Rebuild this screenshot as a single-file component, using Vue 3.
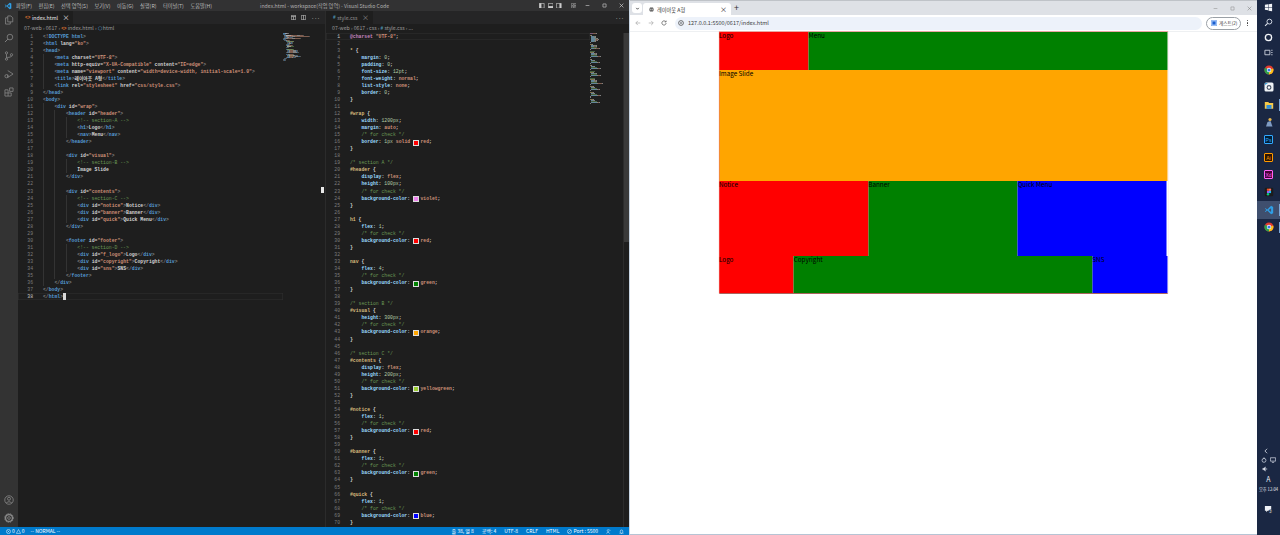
<script setup>
import { computed } from 'vue'

const htmlSrc = `<!DOCTYPE html>
<html lang="ko">
<head>
    <meta charset="UTF-8">
    <meta http-equiv="X-UA-Compatible" content="IE=edge">
    <meta name="viewport" content="width=device-width, initial-scale=1.0">
    <title>레이아웃 A형</title>
    <link rel="stylesheet" href="css/style.css">
</head>
<body>
    <div id="wrap">
        <header id="header">
            <!-- section-A -->
            <h1>Logo</h1>
            <nav>Menu</nav>
        </header>
        
        <div id="visual">
            <!-- section-B -->
            Image Slide
        </div>
        
        <div id="contents">
            <!-- section-C -->
            <div id="notice">Notice</div>
            <div id="banner">Banner</div>
            <div id="quick">Quick Menu</div>
        </div>
        
        <footer id="footer">
            <!-- section-D -->
            <div id="f_logo">Logo</div>
            <div id="copyright">Copyright</div>
            <div id="sns">SNS</div>
        </footer>
    </div>
</body>
</html>`

const cssSrc = `@charset "UTF-8";

* {
    margin: 0;
    padding: 0;
    font-size: 12pt;
    font-weight: normal;
    list-style: none;
    border: 0;
}

#wrap {
    width: 1200px;
    margin: auto;
    /* for check */
    border: 1px solid red;
}

/* section A */
#header {
    display: flex;
    height: 100px;
    /* for check */
    background-color: violet;
}

h1 {
    flex: 1;
    /* for check */
    background-color: red;
}

nav {
    flex: 4;
    /* for check */
    background-color: green;
}

/* section B */
#visual {
    height: 300px;
    /* for check */
    background-color: orange;
}

/* section C */
#contents {
    display: flex;
    height: 200px;
    /* for check */
    background-color: yellowgreen;
}

#notice {
    flex: 1;
    /* for check */
    background-color: red;
}

#banner {
    flex: 1;
    /* for check */
    background-color: green;
}

#quick {
    flex: 1;
    /* for check */
    background-color: blue;
}`

const swatches = ['red', 'green', 'blue', 'violet', 'orange', 'yellowgreen']

function splitIndent(line) {
  const m = line.match(/^ */)[0].length
  return { guides: Math.floor(m / 4), rest: line.slice(m) }
}

function tokenHtml(rest) {
  const out = []
  const re = /<!--.*?-->|<\/?!?\w*|\/?>|"[^"]*"|[\w-]+(?==)|=|[^<>"=]+/g
  for (const t of rest.match(re) || []) {
    if (t.startsWith('<!--')) out.push({ c: 'comment', t })
    else if (t[0] === '<') {
      const m = t.match(/^<\/?!?/)[0]
      out.push({ c: 'punct', t: m })
      out.push({ c: 'tag', t: t.slice(m.length) })
    } else if (t === '>' || t === '/>') out.push({ c: 'punct', t })
    else if (t[0] === '"') out.push({ c: 'str', t })
    else if (t === '=') out.push({ c: 'plain', t })
    else if (/^[\w-]+$/.test(t) && rest.includes(t + '=')) out.push({ c: 'attr', t })
    else if (t === ' html') out.push({ c: 'tag', t })
    else out.push({ c: 'plain', t })
  }
  return out
}

function tokenCss(rest) {
  if (!rest) return []
  if (rest.startsWith('/*')) return [{ c: 'comment', t: rest }]
  if (rest.startsWith('@charset')) {
    return [{ c: 'at', t: '@charset ' }, { c: 'str', t: '"UTF-8"' }, { c: 'plain', t: ';' }]
  }
  if (rest === '}') return [{ c: 'plain', t: '}' }]
  if (rest.endsWith('{')) {
    return [{ c: 'sel', t: rest.slice(0, -1) }, { c: 'plain', t: '{' }]
  }
  const m = rest.match(/^([\w-]+): (.*);$/)
  const out = [{ c: 'attr', t: m[1] }, { c: 'plain', t: ': ' }]
  m[2].split(' ').forEach((v, i) => {
    if (i) out.push({ c: 'plain', t: ' ' })
    if (swatches.includes(v)) out.push({ swatch: v })
    out.push({ c: /^\d/.test(v) ? 'num' : 'str', t: v })
  })
  out.push({ c: 'plain', t: ';' })
  return out
}

const build = (src, fn) =>
  src.split('\n').map((line, i) => {
    const { guides, rest } = splitIndent(line)
    return { n: i + 1, guides, tokens: fn(rest) }
  })

const htmlLines = computed(() => build(htmlSrc, tokenHtml))
const cssLines = computed(() => build(cssSrc, tokenCss))

const miniColors = {
  punct: '#808080', tag: '#569cd6', attr: '#9cdcfe', str: '#ce9178', comment: '#6a9955',
  plain: '#d4d4d4', sel: '#d7ba7d', num: '#b5cea8', at: '#c586c0'
}

function miniStyle(tok, indent) {
  if (tok.swatch) return { width: '0px' }
  return { width: tok.t.length * 0.36 + 'px', background: miniColors[tok.c] }
}

const menus = ['파일(F)', '편집(E)', '선택 영역(S)', '보기(V)', '이동(G)', '실행(R)', '터미널(T)', '도움말(H)']
</script>

<template>
  <div class="screen">
    <!-- vs code -->
    <div class="vscode">
      <div class="titlebar">
        <svg class="vs-logo" viewBox="0 0 24 24"><path d="M17 2 8 11 3.5 7.500 2 8.500 6 12l-4 3.500 1.500 1L8 13l9 9 5-2.500V4.500z" fill="#2f9fe6"/><path d="M17 7.500v9L11 12z" fill="#333"/></svg>
        <div class="menus"><span v-for="m in menus" :key="m">{{ m }}</span></div>
        <div class="wintitle">index.html - workspace(작업 영역) - Visual Studio Code</div>
        <div class="layout-btns">
          <svg viewBox="0 0 8 8"><path d="M.5.5h7v7h-7zM3 .5v7" fill="none" stroke="#ccc"/><path d="M.5.5H3v7H.5z" fill="#ccc"/></svg>
          <svg viewBox="0 0 8 8"><path d="M.5.5h7v7h-7z" fill="none" stroke="#ccc"/><path d="M.5 4.500h7v3h-7z" fill="#ccc"/></svg>
          <svg viewBox="0 0 8 8"><path d="M.5.5h7v7h-7z" fill="none" stroke="#ccc"/><path d="M5 .5h2.500v7H5z" fill="#ccc"/></svg>
          <svg class="gap" viewBox="0 0 8 8"><path d="M.5.5h3v3h-3zM4.500.5h3v3h-3zM.5 4.500h3v3h-3zM4.500 4.500h3v3h-3z" fill="none" stroke="#aaa" stroke-width=".8"/></svg>
        </div>
        <div class="win-btns">
          <svg viewBox="0 0 8 8"><path d="M1 4h6" stroke="#ccc"/></svg>
          <svg viewBox="0 0 8 8"><path d="M1.500 1.500h5v5h-5z" fill="none" stroke="#ccc"/></svg>
          <svg viewBox="0 0 8 8"><path d="m1 1 6 6M7 1 1 7" stroke="#ddd"/></svg>
        </div>
      </div>

      <div class="workbench">
        <div class="activity">
          <svg viewBox="0 0 16 16"><path d="M6 1.500h5l3 3V11H6zM6 4.500H2.500v10H10V11" fill="none" stroke="#8c8c8c" stroke-width="1.200"/></svg>
          <svg viewBox="0 0 16 16"><circle cx="9.500" cy="6.500" r="4.500" fill="none" stroke="#8c8c8c" stroke-width="1.200"/><path d="M6.300 9.700 1.500 14.500" stroke="#8c8c8c" stroke-width="1.400"/></svg>
          <svg viewBox="0 0 16 16"><circle cx="4" cy="3" r="1.800" fill="none" stroke="#8c8c8c" stroke-width="1.200"/><circle cx="4" cy="13" r="1.800" fill="none" stroke="#8c8c8c" stroke-width="1.200"/><circle cx="12" cy="6" r="1.800" fill="none" stroke="#8c8c8c" stroke-width="1.200"/><path d="M4 5v6M12 8c0 3-8 1.500-8 3" fill="none" stroke="#8c8c8c" stroke-width="1.200"/></svg>
          <svg viewBox="0 0 16 16"><path d="M6 2.500 14.500 8 6 13.500V9" fill="none" stroke="#8c8c8c" stroke-width="1.200"/><circle cx="4" cy="11.500" r="2.600" fill="none" stroke="#8c8c8c" stroke-width="1.200"/></svg>
          <svg viewBox="0 0 16 16"><path d="M1.500 4.500h5v5h5v5h-10zM1.500 9.500h5v5M9 1.500h5.500v5.500H9z" fill="none" stroke="#8c8c8c" stroke-width="1.200"/></svg>
          <div class="activity-fill"></div>
          <svg viewBox="0 0 16 16"><circle cx="8" cy="8" r="6.800" fill="none" stroke="#8c8c8c" stroke-width="1.200"/><circle cx="8" cy="6" r="2.400" fill="none" stroke="#8c8c8c" stroke-width="1.200"/><path d="M3.800 13c.8-3 7.600-3 8.400 0" fill="none" stroke="#8c8c8c" stroke-width="1.200"/></svg>
          <svg viewBox="0 0 16 16"><circle cx="8" cy="8" r="2.200" fill="none" stroke="#8c8c8c" stroke-width="1.200"/><circle cx="8" cy="8" r="5.500" fill="none" stroke="#8c8c8c" stroke-width="2"/><circle cx="8" cy="8" r="7" fill="none" stroke="#8c8c8c" stroke-width="1.400" stroke-dasharray="2 1.700"/></svg>
        </div>

        <!-- left group -->
        <div class="group group-left">
          <div class="tabs">
            <div class="tab active">
              <span class="file-ic orange">&lt;&gt;</span><span>index.html</span><span class="tab-x">×</span>
            </div>
            <div class="tabs-fill"></div>
            <div class="tab-actions">
              <svg viewBox="0 0 8 8"><path d="M.5.5h7v7h-7zM.5 2.500h7M4 2.500v5" fill="none" stroke="#ccc"/></svg>
              <svg viewBox="0 0 8 8"><path d="M.5.5h7v7h-7zM4 .5v7" fill="none" stroke="#ccc"/></svg>
              <span>···</span>
            </div>
          </div>
          <div class="crumbs">07-web <i>›</i> 0617 <i>›</i> <span class="file-ic orange">&lt;&gt;</span> index.html <i>›</i> <span class="cube">⬡</span> html</div>
          <div class="editor">
            <div class="code">
              <div v-for="l in htmlLines" :key="l.n" class="line" :class="{ current: l.n === 38 }">
                <span class="num" :class="{ on: l.n === 38 }">{{ l.n }}</span>
                <span class="text">
                  <span v-for="g in l.guides" :key="g" class="guide"></span>
                  <span v-for="(t, i) in l.tokens" :key="i" :class="t.c">{{ t.t }}</span>
                  <span v-if="l.n === 38" class="cursor"></span>
                </span>
              </div>
            </div>
            <div class="minimap mini-left">
              <div v-for="l in htmlLines" :key="l.n" class="mini-line">
                <span class="mini-tok" :style="{ width: l.guides * 1.44 + 'px' }"></span>
                <span v-for="(t, i) in l.tokens" :key="i" class="mini-tok" :style="miniStyle(t)"></span>
              </div>
            </div>
          </div>
        </div>

        <!-- right group -->
        <div class="group group-right">
          <div class="tabs">
            <div class="tab active dim">
              <span class="file-ic blue">#</span><span>style.css</span><span class="tab-x">×</span>
            </div>
            <div class="tabs-fill"></div>
            <div class="tab-actions"><span>···</span></div>
          </div>
          <div class="crumbs">07-web <i>›</i> 0617 <i>›</i> css <i>›</i> <span class="file-ic blue">#</span> style.css <i>›</i> ...</div>
          <div class="editor">
            <div class="code">
              <div v-for="l in cssLines" :key="l.n" class="line" :class="{ current: l.n === 1 }">
                <span class="num" :class="{ on: l.n === 1 }">{{ l.n }}</span>
                <span class="text">
                  <span v-for="g in l.guides" :key="g" class="guide"></span>
                  <template v-for="(t, i) in l.tokens" :key="i">
                    <span v-if="t.swatch" class="swatch" :style="{ background: t.swatch }"></span>
                    <span v-else :class="t.c">{{ t.t }}</span>
                  </template>
                </span>
              </div>
            </div>
            <div class="minimap mini-right">
              <div v-for="l in cssLines" :key="l.n" class="mini-line">
                <span class="mini-tok" :style="{ width: l.guides * 1.44 + 'px' }"></span>
                <span v-for="(t, i) in l.tokens" :key="i" class="mini-tok" :style="miniStyle(t)"></span>
              </div>
            </div>
            <div class="scrollbar"><div class="slider"></div></div>
          </div>
          <div class="ibeam"></div>
        </div>
      </div>

      <div class="statusbar">
        <span class="st-left">
          <svg viewBox="0 0 8 8"><circle cx="4" cy="4" r="3.300" fill="none" stroke="#fff" stroke-width=".8"/><path d="m2.500 2.500 3 3m0-3-3 3" stroke="#fff" stroke-width=".7"/></svg>0
          <svg viewBox="0 0 8 8"><path d="M4 .8 7.500 7H.5z" fill="none" stroke="#fff" stroke-width=".8"/></svg>0
        </span>
        <span class="st-mode">-- NORMAL --</span>
        <span class="st-fill"></span>
        <span class="st-right">
          <span>줄 38, 열 8</span><span>공백: 4</span><span>UTF-8</span><span>CRLF</span><span>HTML</span>
          <span class="st-port"><svg viewBox="0 0 8 8"><circle cx="4" cy="4" r="3.300" fill="none" stroke="#fff" stroke-width=".8"/><path d="m1.500 6.500 5-5" stroke="#fff" stroke-width=".7"/></svg>Port : 5500</span>
          <svg viewBox="0 0 8 8"><circle cx="3.500" cy="2.500" r="1.600" fill="none" stroke="#fff" stroke-width=".7"/><path d="M1 7.500c0-3 4-3 5 0M6 1l1.500 1.500" fill="none" stroke="#fff" stroke-width=".7"/></svg>
          <svg viewBox="0 0 8 8"><path d="M2 6V3.500a2 2 0 0 1 4 0V6l.8.7H1.200zM3.300 7.300h1.400" fill="none" stroke="#fff" stroke-width=".8"/></svg>
        </span>
      </div>
    </div>

    <!-- chrome -->
    <div class="browser">
      <div class="chrome-tabs">
        <div class="tab-search"><svg viewBox="0 0 8 8"><path d="m2 3 2 2.200L6 3" fill="none" stroke="#222" stroke-width="1.200"/></svg></div>
        <div class="chrome-tab">
          <svg class="globe" viewBox="0 0 8 8"><circle cx="4" cy="4" r="3.500" fill="#444"/><path d="M4 .8c-2 2-2 4.400 0 6.400m0-6.400c2 2 2 4.400 0 6.400M.8 4h6.400" fill="none" stroke="#fff" stroke-width=".6"/></svg>
          <span class="chrome-title">레이아웃 A형</span>
          <span class="chrome-x">×</span>
        </div>
        <span class="chrome-plus">+</span>
        <span class="chrome-fill"></span>
        <div class="chrome-win">
          <svg viewBox="0 0 8 8"><path d="M1 4h6" stroke="#888" stroke-width=".8"/></svg>
          <svg viewBox="0 0 8 8"><path d="M1.500 1.500h5v5h-5z" fill="none" stroke="#888" stroke-width=".8"/></svg>
          <svg viewBox="0 0 8 8"><path d="m1 1 6 6M7 1 1 7" stroke="#777" stroke-width=".8"/></svg>
        </div>
      </div>
      <div class="toolbar">
        <svg class="nav-ic" viewBox="0 0 8 8"><path d="M7 4H1.200M3.800 1.200 1 4l2.800 2.800" fill="none" stroke="#9a9a9a" stroke-width=".8"/></svg>
        <svg class="nav-ic" viewBox="0 0 8 8"><path d="M1 4h5.800M4.200 1.200 7 4 4.200 6.800" fill="none" stroke="#9a9a9a" stroke-width=".8"/></svg>
        <svg class="nav-ic" viewBox="0 0 8 8"><path d="M6.800 4A2.800 2.800 0 1 1 6 2M6.800.8V2.600H5" fill="none" stroke="#444" stroke-width=".9"/></svg>
        <div class="omnibox">
          <svg viewBox="0 0 8 8"><circle cx="4" cy="4" r="3.200" fill="none" stroke="#333" stroke-width=".9"/><circle cx="4" cy="4" r="1" fill="#333"/></svg>
          <span>127.0.0.1:5500/0617/index.html</span>
        </div>
        <div class="guest">
          <span class="guest-ic"></span><span>게스트(2)</span>
        </div>
        <span class="kebab"><i></i><i></i><i></i></span>
      </div>
      <div class="page">
        <div class="wrap">
          <div class="p-header">
            <div class="p-logo">Logo</div>
            <div class="p-menu">Menu</div>
          </div>
          <div class="p-visual">Image Slide</div>
          <div class="p-contents">
            <div class="red">Notice</div>
            <div class="green">Banner</div>
            <div class="blue">Quick Menu</div>
          </div>
          <div class="p-footer">
            <div class="red one">Logo</div>
            <div class="green four">Copyright</div>
            <div class="blue one">SNS</div>
          </div>
        </div>
      </div>
    </div>

    <!-- taskbar -->
    <div class="taskbar">
      <div class="tb-top">
        <div class="tb-sm"><svg viewBox="0 0 10 10"><path d="M1 2 4.500 1.500v3H1zM5 1.400 9 .8v3.700H5zM1 5h3.500v3L1 7.500zM5 5h4v4.200L5 8.600z" fill="#f2f4f8"/></svg></div>
        <div class="tb-sm"><svg viewBox="0 0 10 10"><circle cx="6" cy="4" r="2.700" fill="none" stroke="#dfe4ee" stroke-width="1"/><path d="M4 6 1.200 8.800" stroke="#dfe4ee" stroke-width="1.200"/></svg></div>
        <div class="tb-sm"><svg viewBox="0 0 10 10"><circle cx="5" cy="5" r="3.500" fill="none" stroke="#f2f4f8" stroke-width="1.500"/></svg></div>
        <div class="tb-sm"><svg viewBox="0 0 10 10"><path d="M1 2.500h5.500v5H1zM8 2.500h1.500M8 5h1.500M8 7.500h1.500" fill="none" stroke="#dfe4ee" stroke-width=".9"/></svg></div>
      </div>
      <div class="tb-apps">
        <div class="tb-app"><svg viewBox="0 0 10 10"><circle cx="5" cy="5" r="4.500" fill="#e33b2e"/><path d="M5 5 9.200 3.500A4.500 4.500 0 0 1 5 9.500z" fill="#f9c21b"/><path d="M5 5 5 9.500A4.500 4.500 0 0 1 1 2.800z" fill="#2ba24c"/><circle cx="5" cy="5" r="2.200" fill="#fff"/><circle cx="5" cy="5" r="1.600" fill="#3b78e7"/></svg></div>
        <div class="tb-app"><svg viewBox="0 0 10 10"><rect x=".5" y=".5" width="9" height="9" rx="1.500" fill="#eef2f6"/><circle cx="5" cy="5.500" r="2.400" fill="#4a5568"/><circle cx="5" cy="5.500" r="1.200" fill="#fff"/><path d="M1 1h3L1 3z" fill="#39a0d8"/></svg></div>
        <div class="tb-app mark"><svg viewBox="0 0 10 10"><path d="M.8 2h3.400l1 1h4v5.800H.8z" fill="#f7c948"/><path d="M2.500 5h5v3.800h-5z" fill="#2f8fdc"/></svg></div>
        <div class="tb-app"><svg viewBox="0 0 10 10"><circle cx="6" cy="2.500" r="1.600" fill="#e8b64c"/><path d="M2 9.500 3.500 5l3-1 2 5.500z" fill="#7f9cc4"/></svg></div>
        <div class="tb-app"><span class="adobe ps">Ps</span></div>
        <div class="tb-app"><span class="adobe ai">Ai</span></div>
        <div class="tb-app"><span class="adobe xd">Xd</span></div>
        <div class="tb-app"><svg viewBox="0 0 10 10"><rect x=".8" y=".8" width="8.400" height="8.400" rx="1" fill="#1c1c1c"/><circle cx="4" cy="2.700" r="1.200" fill="#f24e1e"/><circle cx="6" cy="2.700" r="1.200" fill="#ff7262"/><circle cx="4" cy="5" r="1.200" fill="#a259ff"/><circle cx="6" cy="5" r="1.200" fill="#1abcfe"/><circle cx="4" cy="7.300" r="1.200" fill="#0acf83"/></svg></div>
        <div class="tb-app active mark"><svg viewBox="0 0 24 24"><path d="M17 2 8 11 3.500 7.500 2 8.500 6 12l-4 3.500 1.500 1L8 13l9 9 5-2.500V4.500z" fill="#2f9fe6"/><path d="M17 7.500v9L11 12z" fill="#3f4f6e"/></svg></div>
        <div class="tb-app mark"><svg viewBox="0 0 10 10"><circle cx="5" cy="5" r="4.500" fill="#e33b2e"/><path d="M5 5 9.200 3.500A4.500 4.500 0 0 1 5 9.500z" fill="#f9c21b"/><path d="M5 5 5 9.500A4.500 4.500 0 0 1 1 2.800z" fill="#2ba24c"/><circle cx="5" cy="5" r="2.200" fill="#fff"/><circle cx="5" cy="5" r="1.600" fill="#3b78e7"/></svg></div>
      </div>
      <div class="tb-fill"></div>
      <div class="tray">
        <svg class="chev" viewBox="0 0 8 8"><path d="M5.500 1 2.500 4l3 3" fill="none" stroke="#e8ecf4" stroke-width="1"/></svg>
        <div class="tray-row">
          <svg viewBox="0 0 8 8"><circle cx="4" cy="4.500" r="2.600" fill="none" stroke="#dfe4ee" stroke-width=".9"/><path d="M4 .5v2" stroke="#dfe4ee"/></svg>
          <svg viewBox="0 0 8 8"><path d="M.5 1h7v4.500h-7zM2.500 7.200h3" fill="none" stroke="#dfe4ee" stroke-width=".9"/></svg>
        </div>
        <div class="tray-row left">
          <svg viewBox="0 0 8 8"><path d="M1 3v2h1.500L4.500 7V1L2.500 3zM6 3l1 1-1 1" fill="#dfe4ee" stroke="#dfe4ee" stroke-width=".4"/></svg>
        </div>
        <span class="tray-a">A</span>
        <span class="tray-time">오후 12:04</span>
        <svg class="tray-note" viewBox="0 0 10 10"><path d="M1 1h7v5.500H4L2.500 8V6.500H1z" fill="#eef1f6"/><circle cx="7.200" cy="7.200" r="2.300" fill="#30384c"/><text x="7.200" y="8.700" font-size="4" text-anchor="middle" fill="#fff" font-family="Liberation Sans">2</text></svg>
      </div>
    </div>
  </div>
</template>

<style scoped>
.screen {
  display: flex;
  width: 1280px;
  height: 535px;
  overflow: hidden;
  font-family: "Noto Sans CJK KR", "Liberation Sans", sans-serif;
}

/* vs code */
.vscode {
  width: 629px;
  display: flex;
  flex-direction: column;
  background: #1e1e1e;
  color: #ccc;
  flex: none;
}
.titlebar {
  height: 11px;
  background: #323233;
  display: flex;
  align-items: center;
  font-size: 5.2px;
  position: relative;
  flex: none;
}
.vs-logo {
  width: 8px;
  height: 8px;
  margin-left: 4px;
}
.menus {
  display: flex;
  gap: 6.5px;
  margin-left: 4px;
  color: #bdbdbd;
}
.wintitle {
  position: absolute;
  left: 260px;
  top: 0;
  line-height: 11px;
  color: #b0b0b0;
  white-space: nowrap;
}
.layout-btns {
  margin-left: auto;
  display: flex;
  gap: 3px;
  align-items: center;
}
.layout-btns svg {
  width: 5.500px;
  height: 5.500px;
}
.layout-btns .gap {
  margin-left: 6px;
}
.win-btns {
  display: flex;
  gap: 12px;
  margin-left: 9px;
  margin-right: 5px;
}
.win-btns svg {
  width: 5px;
  height: 5px;
}
.workbench {
  flex: 1;
  display: flex;
  min-height: 0;
}
.activity {
  width: 18px;
  background: #333;
  display: flex;
  flex-direction: column;
  align-items: center;
  flex: none;
}
.activity svg {
  width: 10px;
  height: 10px;
  margin: 4px 0;
  flex: none;
}
.activity-fill {
  flex: 1;
}
.group {
  display: flex;
  flex-direction: column;
  min-width: 0;
  position: relative;
}
.group-left {
  width: 307px;
  flex: none;
}
.group-right {
  flex: 1;
  border-left: 1px solid #2b2b2b;
}
.tabs {
  height: 13px;
  background: #252526;
  display: flex;
  font-size: 5.2px;
  flex: none;
}
.tab {
  display: flex;
  align-items: center;
  padding: 0 4px 0 7px;
  background: #1e1e1e;
  color: #e8e8e8;
  gap: 1.500px;
  min-width: 34px;
}
.tab.dim {
  color: #8f8f8f;
  background: #1e1e1e;
}
.tab-x {
  margin-left: 3px;
  font-size: 7px;
  line-height: 1;
}
.tabs-fill {
  flex: 1;
}
.tab-actions {
  display: flex;
  align-items: center;
  gap: 5px;
  padding-right: 5px;
  color: #bbb;
}
.tab-actions svg {
  width: 5px;
  height: 5px;
}
.file-ic {
  font-family: "Liberation Mono", monospace;
  font-size: 4.500px;
  font-weight: 700;
}
.file-ic.orange {
  color: #e37933;
}
.file-ic.blue {
  color: #519aba;
}
.crumbs {
  height: 8px;
  line-height: 8px;
  font-size: 5.2px;
  color: #9a9a9a;
  padding-left: 6px;
  white-space: nowrap;
  flex: none;
}
.crumbs i {
  font-style: normal;
}
.cube {
  color: #4f9fd8;
}
.editor {
  flex: 1;
  display: flex;
  min-height: 0;
  overflow: hidden;
  padding-top: 0.500px;
}
.code {
  flex: 1;
  min-width: 0;
  font-family: "Liberation Mono", "Noto Sans CJK KR", monospace;
  font-size: 4.770px;
  font-weight: 700;
}
.line {
  height: 7.060px;
  line-height: 7.060px;
  display: flex;
  white-space: pre;
}
.line.current {
  box-shadow: inset 0 0 0 0.500px #303030;
}
.num {
  width: 15px;
  margin-right: 10px;
  text-align: right;
  color: #7d7d7d;
  flex: none;
  font-weight: 400;
}
.group-right .num {
  width: 14px;
}
.num.on {
  color: #c6c6c6;
}
.text {
  display: flex;
  white-space: pre;
  color: #d4d4d4;
}
.guide {
  width: 11.450px;
  flex: none;
  box-shadow: inset 1px 0 0 #333;
}
.group-right .guide {
  box-shadow: none;
}
.punct { color: #808080; }
.tag { color: #569cd6; }
.attr { color: #9cdcfe; }
.str { color: #ce9178; }
.comment { color: #6a9955; font-weight: 400; }
.plain { color: #d4d4d4; }
.sel { color: #d7ba7d; }
.at { color: #c586c0; }
.code .num { color: #7d7d7d; }
.code .num.on { color: #c6c6c6; }
.text .num { color: #b5cea8; width: auto; margin: 0; }
.swatch {
  width: 4px;
  height: 4px;
  margin: 1.500px 1.500px 0 0;
  border: 0.500px solid #ddd;
  flex: none;
}
.cursor {
  width: 2.800px;
  height: 7px;
  background: #d8d8d8;
}
.minimap {
  flex: none;
  overflow: hidden;
}
.mini-left {
  width: 36px;
  padding-right: 6px;
}
.mini-right {
  width: 33px;
}
.mini-line {
  display: flex;
  opacity: 0.55;
}
.mini-left .mini-line {
  height: 0.740px;
}
.mini-right .mini-line {
  height: 1.020px;
}
.mini-tok {
  display: block;
  height: 100%;
  flex: none;
}
.scrollbar {
  width: 5px;
  background: #1e1e1e;
  border-left: 1px solid #2c2c2c;
  flex: none;
}
.slider {
  height: 209px;
  background: #3a3a3a;
}
.ibeam {
  position: absolute;
  left: -5px;
  top: 176px;
  width: 3px;
  height: 6px;
  background: #e8e8e8;
}
.statusbar {
  height: 8px;
  background: #007acc;
  color: #fff;
  display: flex;
  align-items: center;
  font-size: 5px;
  line-height: 8px;
  flex: none;
  padding: 0 5px 0 6px;
}
.statusbar svg {
  width: 5px;
  height: 5px;
  flex: none;
}
.st-left {
  display: flex;
  align-items: center;
  gap: 1px;
}
.st-mode {
  margin-left: 6px;
}
.st-fill {
  flex: 1;
}
.st-right {
  display: flex;
  align-items: center;
  gap: 8px;
}
.st-port {
  display: flex;
  align-items: center;
  gap: 1px;
}

/* browser */
.browser {
  flex: 1;
  display: flex;
  flex-direction: column;
  background: #fff;
  border-left: 1px solid #c9d6e4;
  border-bottom: 1px solid #b6c4d4;
  min-width: 0;
}
.chrome-tabs {
  height: 15px;
  background: #dee1e6;
  border-top: 1px solid #bfc3c8;
  display: flex;
  align-items: flex-end;
  box-sizing: border-box;
  flex: none;
}
.tab-search {
  width: 10px;
  height: 10px;
  background: #fff;
  border-radius: 3px;
  margin: 0 1px 2px 2px;
  display: flex;
  align-items: center;
  justify-content: center;
}
.tab-search svg {
  width: 5px;
  height: 5px;
}
.chrome-tab {
  width: 88px;
  height: 12px;
  background: #fff;
  border-radius: 3px 3px 0 0;
  display: flex;
  align-items: center;
  padding: 0 4px 0 6px;
  box-sizing: border-box;
  font-size: 5.200px;
  color: #333;
}
.globe {
  width: 5px;
  height: 5px;
  margin-right: 3px;
}
.chrome-x {
  margin-left: auto;
  font-size: 7px;
  line-height: 1;
  color: #222;
}
.chrome-plus {
  margin: 0 0 2px 3px;
  font-size: 9px;
  line-height: 11px;
  color: #333;
}
.chrome-fill {
  flex: 1;
}
.chrome-win {
  display: flex;
  gap: 12px;
  height: 13px;
  align-items: center;
  padding-right: 5px;
}
.chrome-win svg {
  width: 5px;
  height: 5px;
}
.toolbar {
  height: 17px;
  background: #fff;
  display: flex;
  align-items: center;
  padding: 0 5px;
  border-bottom: 1px solid #eef0f2;
  box-sizing: border-box;
  flex: none;
}
.nav-ic {
  width: 6px;
  height: 6px;
  margin-right: 7px;
  flex: none;
}
.omnibox {
  margin-left: 1px;
  width: 527px;
  height: 13px;
  border-radius: 7px;
  background: #edf2fa;
  display: flex;
  align-items: center;
  padding-left: 3px;
  gap: 4px;
  box-sizing: border-box;
  font-size: 5.500px;
  color: #3c3c3c;
  flex: none;
}
.omnibox svg {
  width: 6px;
  height: 6px;
}
.guest {
  margin-left: 4px;
  width: 35px;
  height: 13px;
  border: 0.700px solid #9aa0a6;
  border-radius: 7px;
  box-sizing: border-box;
  display: flex;
  align-items: center;
  gap: 2px;
  padding-left: 4px;
  font-size: 4.600px;
  color: #333;
  flex: none;
}
.guest-ic {
  width: 6px;
  height: 6px;
  background: #1a5fd0;
  border-radius: 1.500px;
  box-shadow: inset 0 0 0 1.500px #9cc0f5;
}
.kebab {
  margin-left: 6px;
  display: flex;
  flex-direction: column;
  gap: 1px;
}
.kebab i {
  width: 1.200px;
  height: 1.200px;
  background: #333;
  border-radius: 50%;
}
.page {
  flex: 1;
  background: #fff;
  font-size: 6.300px;
  line-height: 8px;
  font-family: "Noto Sans CJK KR", "Open Sans", sans-serif;
  color: #000;
}
.wrap {
  width: 448px;
  margin: 0 auto;
  transform: translateX(-0.500px);
  box-shadow: 0 0 0 0.600px #e6736a, 0 0.800px 0 0 #222;
}
.p-header {
  display: flex;
  height: 38px;
}
.p-logo {
  flex: 1;
  background: #f00;
}
.p-menu {
  flex: 4;
  background: #008000;
}
.p-visual {
  height: 111px;
  background: #ffa500;
}
.p-contents {
  display: flex;
  height: 75px;
}
.p-contents div {
  flex: 1;
}
.p-footer {
  display: flex;
  height: 37px;
}
.one {
  flex: 1;
}
.four {
  flex: 4;
}
.page .red { background: #f00; }
.page .green { background: #008000; }
.page .blue { background: #00f; }

/* taskbar */
.taskbar {
  width: 23px;
  background: #1a2743;
  display: flex;
  flex-direction: column;
  align-items: stretch;
  flex: none;
  color: #e8ecf4;
}
.tb-top {
  padding-top: 0;
}
.tb-sm {
  height: 15px;
  display: flex;
  align-items: center;
  justify-content: center;
}
.tb-sm svg {
  width: 9px;
  height: 9px;
}
.tb-apps {
  margin-top: 1px;
}
.tb-app {
  height: 17.500px;
  display: flex;
  align-items: center;
  justify-content: center;
  position: relative;
}
.tb-app svg {
  width: 10px;
  height: 10px;
}
.tb-app.active {
  background: #3f4f6e;
}
.tb-app.mark::after {
  content: "";
  position: absolute;
  right: 0;
  top: 3px;
  bottom: 3px;
  width: 1px;
  background: #7aa6d6;
}
.adobe {
  width: 9px;
  height: 9px;
  border-radius: 1px;
  font-family: "Liberation Sans", sans-serif;
  font-size: 5px;
  line-height: 8px;
  text-align: center;
  box-sizing: border-box;
  border: 0.600px solid;
}
.adobe.ps { background: #001e36; color: #31a8ff; }
.adobe.ai { background: #2e1500; color: #ff9a00; }
.adobe.xd { background: #470137; color: #ff61f6; }
.tb-fill {
  flex: 1;
}
.tray {
  display: flex;
  flex-direction: column;
  align-items: center;
  height: 87px;
}
.chev {
  width: 6px;
  height: 6px;
  margin-left: -1px;
  margin-right: 4px;
}
.tray-row {
  display: flex;
  gap: 3px;
  margin-top: 3px;
}
.tray-row.left {
  width: 100%;
  padding-left: 5px;
  box-sizing: border-box;
}
.tray-row svg {
  width: 6px;
  height: 6px;
}
.tray-a {
  font-size: 7px;
  line-height: 8px;
  margin-top: 3px;
  font-family: "Noto Sans CJK KR", sans-serif;
}
.tray-time {
  font-size: 4.200px;
  line-height: 6px;
  margin-top: 3px;
  white-space: nowrap;
}
.tray-note {
  width: 9px;
  height: 9px;
  margin-top: 13px;
}
</style>
